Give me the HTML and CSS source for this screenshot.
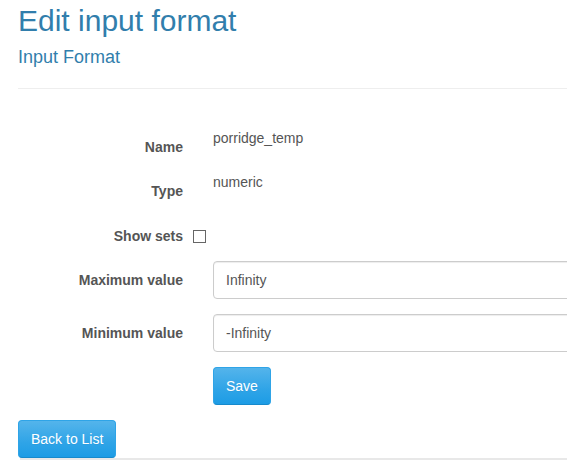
FILE: index.html
```html
<!DOCTYPE html>
<html lang="en">
<head>
<meta charset="utf-8">
<title>Edit input format</title>
<link rel="stylesheet" href="styles.css">
</head>
<body>
<div class="container">
  <h2 class="page-title">Edit input format</h2>
  <h4 class="section-title">Input Format</h4>
  <hr class="rule">
  <form class="form">
    <div class="form-row">
      <div class="label-col"><label class="control-label">Name</label></div>
      <div class="value-col"><div class="static">porridge_temp</div></div>
    </div>
    <div class="form-row">
      <div class="label-col"><label class="control-label">Type</label></div>
      <div class="value-col"><div class="static">numeric</div></div>
    </div>
    <div class="form-row check-row">
      <div class="label-col"><label class="control-label check-label" for="showsets">Show sets</label></div>
      <input class="checkbox" type="checkbox" id="showsets">
    </div>
    <div class="form-row">
      <div class="label-col"><label class="control-label">Maximum value</label></div>
      <div class="value-col"><input class="form-control" type="text" value="Infinity"></div>
    </div>
    <div class="form-row">
      <div class="label-col"><label class="control-label">Minimum value</label></div>
      <div class="value-col"><input class="form-control" type="text" value="-Infinity"></div>
    </div>
    <div class="form-row">
      <div class="label-col"></div>
      <div class="value-col"><button type="button" class="btn">Save</button></div>
    </div>
  </form>
  <div class="back-row"><a class="btn" href="#">Back to List</a></div>
  <hr class="footer-rule">
</div>
</body>
</html>
```

FILE: styles.css
```css
html, body {
  margin: 0;
  padding: 0;
  overflow: hidden;
  background: #fff;
}

body {
  font-family: "Liberation Sans", Arial, Helvetica, sans-serif;
  font-size: 14px;
  line-height: 20px;
  color: #555555;
}

.container {
  width: 1140px;
  padding: 0 18px;
}

.page-title {
  margin: 4px 0 10px;
  font-size: 30px;
  line-height: 33px;
  font-weight: 500;
  color: #317eac;
}

.section-title {
  margin: 10px 0 0;
  font-size: 18px;
  line-height: 20px;
  font-weight: 500;
  color: #317eac;
}

.rule {
  margin: 21px 0 0;
  border: 0;
  border-top: 1px solid #eeeeee;
  height: 0;
}

.form {
  padding-top: 39px;
}

.form-row {
  display: flex;
  align-items: flex-start;
  gap: 30px;
  margin-bottom: 15px;
}

.label-col {
  width: 165px;
  flex: none;
  text-align: right;
}

.value-col {
  width: 945px;
  flex: none;
}

.control-label {
  display: block;
  padding-top: 9px;
  font-weight: bold;
  color: #555555;
}

.static {
  color: #555555;
}

.check-row {
  gap: 10px;
}

.check-label {
  padding-top: 10px;
  padding-bottom: 0;
}

.checkbox {
  appearance: none;
  -webkit-appearance: none;
  box-sizing: border-box;
  margin: 14px 0 0;
  width: 13px;
  height: 13px;
  background: #ffffff;
  border: 1px solid #666666;
  border-radius: 0;
}

.form-control {
  display: block;
  box-sizing: border-box;
  width: 100%;
  height: 38px;
  padding: 8px 12px;
  font-family: inherit;
  font-size: 14px;
  line-height: 20px;
  color: #555555;
  background: #fff;
  border: 1px solid #cccccc;
  border-radius: 4px;
  box-shadow: inset 0 1px 1px rgba(0, 0, 0, 0.075);
}

.btn {
  display: inline-block;
  box-sizing: border-box;
  height: 38px;
  padding: 8px 12px;
  font-family: inherit;
  font-size: 14px;
  line-height: 20px;
  color: #ffffff;
  text-decoration: none;
  text-shadow: 0 1px 0 rgba(0, 0, 0, 0.05);
  background-color: #2fa4e7;
  background-image: linear-gradient(#54b4eb, #2fa4e7 60%, #1d9ce5);
  border: 1px solid #2fa4e7;
  border-bottom-color: #178acc;
  border-radius: 4px;
  cursor: pointer;
}

.back-row {
  line-height: 0;
}

.footer-rule {
  margin: 0 0 0 2px;
  border: 0;
  border-top: 2px solid #e8e8e8;
  height: 0;
}
```
